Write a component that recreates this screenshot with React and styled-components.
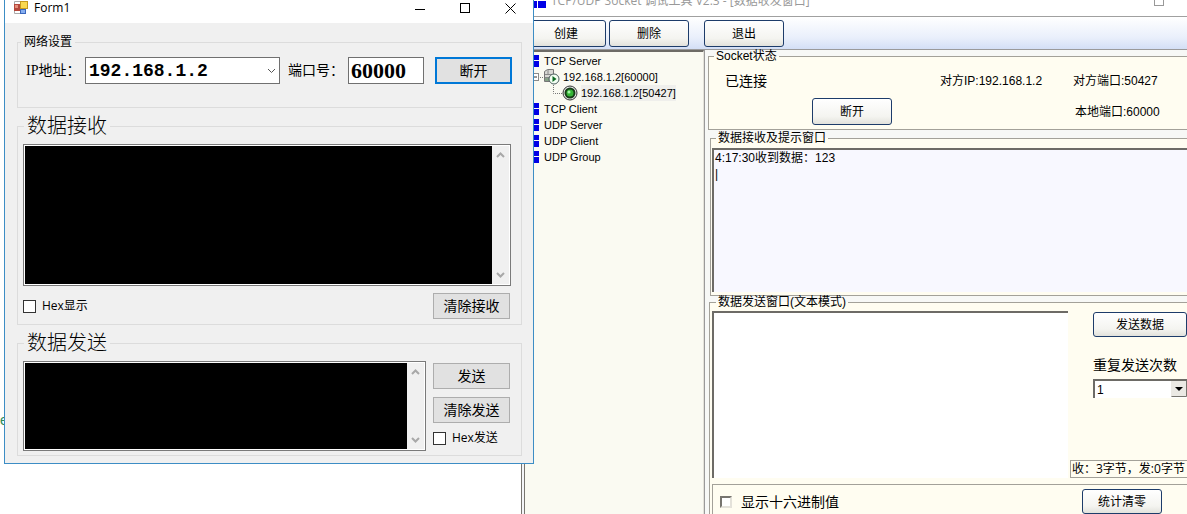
import React, { useState } from 'react';
import styled, { createGlobalStyle } from 'styled-components';

const GlobalStyle = createGlobalStyle`
  * {
    box-sizing: border-box;
  }

  html,
  body,
  #root {
    height: 100%;
    margin: 0;
  }

  body {
    overflow: hidden;
    background: #ffffff;
    color: #000000;
  }

  button,
  input,
  select,
  textarea {
    margin: 0;
    padding: 0;
    border-radius: 0;
    color: inherit;
    font: inherit;
  }
`;

const Desktop = styled.div`
  position: relative;
  height: 100%;
  overflow: hidden;
`;

const CodeEditor = styled.div`
  display: flex;
  flex-direction: column;
  height: 100%;
  padding-top: 410px;
  color: #2e8b57;
  font: 14px/20px 'Liberation Sans', sans-serif;
`;

/* ---------- Form1 ---------- */

const FormWindow = styled.section`
  position: absolute;
  top: -8px;
  left: 4px;
  width: 530px;
  background: #f0f0f0;
  border: 1px solid #3c8dc5;
  font: 12px/14px 'Open Sans', 'Noto Sans CJK SC', sans-serif;
`;

const FormTitleBar = styled.header`
  display: flex;
  align-items: center;
  gap: 6px;
  height: 30px;
  padding: 0 17px 0 9px;
  background: #ffffff;
`;

const FormTitle = styled.h1`
  flex: 1;
  margin: 0;
  font-size: 12px;
  font-weight: 400;
`;

const WindowControls = styled.div`
  display: flex;
  gap: 34px;
`;

const WindowButton = styled.button`
  display: flex;
  background: none;
  border: none;
`;

const FormBody = styled.div`
  display: flex;
  flex-direction: column;
  gap: 6px;
  padding: 12px 11px 7px 12px;
`;

const FormGroup = styled.fieldset`
  min-width: 0;
  margin: 0;
  padding: ${(props) => props.$padding || '6px 10px 4px 5px'};
  border: 1px solid #dcdcdc;
`;

const FormLegend = styled.legend`
  margin-left: ${(props) => (props.$large ? '1px' : '-5px')};
  padding: 0 3px;
  font-size: ${(props) => (props.$large ? '20px' : '12px')};
  line-height: ${(props) => (props.$large ? '24px' : '14px')};
  font-weight: ${(props) => (props.$large ? 300 : 400)};
`;

const NetworkRow = styled.div`
  display: flex;
  align-items: center;
`;

const NetworkLabel = styled.label`
  width: ${(props) => props.$width};
  font: 14px/20px 'Liberation Serif', 'Noto Sans CJK SC', serif;
  white-space: nowrap;
`;

const Combo = styled.div`
  display: grid;
  flex: 1;
  align-items: center;
  margin-right: 8px;

  > * {
    grid-area: 1 / 1;
  }

  > svg {
    justify-self: end;
    margin-right: 4px;
    pointer-events: none;
  }
`;

const AddressSelect = styled.select`
  width: 100%;
  height: 27px;
  padding-left: 3px;
  appearance: none;
  background: #ffffff;
  border: 1px solid #707070;
  font: bold 18px/24px 'Liberation Mono', monospace;
`;

const PortInput = styled.input`
  width: 76px;
  height: 27px;
  margin-right: 11px;
  padding-left: 2px;
  background: #ffffff;
  border: 1px solid #707070;
  font: bold 22px/24px 'Liberation Serif', serif;
`;

const FormButton = styled.button`
  width: 77px;
  height: ${(props) => (props.$primary ? '27px' : '26px')};
  background: #e1e1e1;
  border: ${(props) => (props.$primary ? '2px solid #0078d7' : '1px solid #adadad')};
  font-size: 14px;
  line-height: 20px;
`;

const Console = styled.div`
  display: flex;
  flex: 1;
  height: ${(props) => props.$height};
  padding: 1px;
  background: #ffffff;
  border: 1px solid #7a7a7a;
`;

const ConsoleText = styled.textarea`
  flex: 1;
  min-width: 0;
  background: #000000;
  border: none;
  color: #ffffff;
  outline: none;
  resize: none;
`;

const ScrollRail = styled.div`
  display: flex;
  flex-direction: column;
  align-items: center;
  justify-content: space-between;
  width: 17px;
  padding: 6px 0;
  background: #f0f0f0;
`;

const ReceiveFooter = styled.div`
  display: flex;
  align-items: center;
  justify-content: space-between;
  margin-top: 7px;
  padding: 0 1px 1px 0;
`;

const SendArea = styled.div`
  display: flex;
  gap: 7px;
`;

const SendActions = styled.div`
  display: flex;
  flex-direction: column;
  gap: 8px;
  padding: 2px 1px 0 0;
`;

const FormCheck = styled.label`
  display: flex;
  align-items: center;
  gap: 6px;
  white-space: nowrap;
`;

const FormCheckbox = styled.input`
  width: 13px;
  height: 13px;
  appearance: none;
  background: #ffffff;
  border: 1px solid #333333;

  &:checked {
    background: #333333;
  }
`;

/* ---------- Socket tool ---------- */

const SocketWindow = styled.section`
  position: absolute;
  top: -14px;
  right: 0;
  bottom: 0;
  left: 521px;
  display: flex;
  flex-direction: column;
  overflow: hidden;
  background: #f4f5f8;
  border-left: 4px double #77756f;
  font: 12px/16px 'Liberation Sans', 'Noto Sans CJK SC', sans-serif;
`;

const SocketTitleBar = styled.header`
  display: flex;
  flex: none;
  align-items: center;
  gap: 5px;
  height: 31px;
  padding: 0 22px 0 5px;
  background: #ffffff;
  border-bottom: 1px solid #a0a0a0;
  color: #999999;
`;

const SocketTitle = styled.h1`
  flex: 1;
  margin: 0;
  font: 12px/16px 'Open Sans', 'Noto Sans CJK SC', sans-serif;
`;

const Toolbar = styled.nav`
  display: flex;
  flex: none;
  gap: 3px;
  height: 33px;
  padding: 3px 1px;
  background: linear-gradient(#ffffff, #e9effb 65%, #d3dff5);
  border-bottom: 1px solid #9a9a9a;
`;

const ToolButton = styled.button`
  width: ${(props) => props.$width || '80px'};
  height: ${(props) => props.$height || '27px'};
  background: linear-gradient(#ffffff, #f4f4f0 70%, #e2e2dc);
  border: 1px solid #1d3c6a;
  border-radius: 3px;
`;

const ToolGap = styled.span`
  width: 9px;
`;

const SocketBody = styled.div`
  display: grid;
  flex: 1;
  grid-template-columns: 179px minmax(0, 1fr);
  min-height: 0;
`;

const TreePanel = styled.ul`
  margin: 0;
  padding: 1px 0 0;
  background: #fafaf2;
  border-top: 2px solid #6d6b66;
  border-right: 1px solid #e4e2da;
  font-size: 11px;
  list-style: none;
`;

const TreeRow = styled.li`
  display: flex;
  align-items: center;
  gap: ${(props) => (props.$depth ? '3px' : '4px')};
  height: 16px;
  padding-left: ${(props) => [0, 6, 28][props.$depth || 0]}px;
  white-space: nowrap;
`;

const TreeLabel = styled.span`
  background: ${(props) => (props.$selected ? '#efefec' : 'none')};
`;

const Detail = styled.main`
  display: flex;
  flex-direction: column;
  min-width: 0;
  padding-left: 3px;
  background: #f7f8f6;
  border-left: 1px solid #9a9a9a;
`;

const StatusGroup = styled.fieldset`
  min-width: 0;
  margin: 0;
  padding: 7px 0 4px 16px;
  background: #fffdf1;
  border: 1px solid #a3a199;
  border-right: none;
`;

const ToolLegend = styled.legend`
  margin-left: ${(props) => props.$offset || '4px'};
  padding: 0 2px;
  line-height: 12px;
`;

const StatusGrid = styled.div`
  display: grid;
  grid-template-columns: 87px 128px 133px 1fr;
  grid-template-rows: 24px 27px;
  row-gap: 5px;
  align-items: center;
  white-space: nowrap;
`;

const ConnectionState = styled.span`
  font-size: 14px;
`;

const LocalPort = styled.span`
  grid-column: 4;
  padding-left: 2px;
`;

const ReceiveGroup = styled.fieldset`
  min-width: 0;
  margin: 2px 0 0 2px;
  padding: 4px 0 3px 1px;
  background: #fffdf1;
  border: 1px solid #a3a199;
  border-right: none;
`;

const ToolTextArea = styled.textarea`
  display: block;
  width: 100%;
  height: ${(props) => props.$height};
  padding: 0 1px;
  background: ${(props) => props.$background || '#ffffff'};
  border: 0 solid #6d6b66;
  border-width: 2px 0 0 2px;
  outline: none;
  resize: none;
`;

const SendGroup = styled.fieldset`
  flex: 1;
  min-width: 0;
  margin: 0 0 0 1px;
  padding: 3px 0 0 2px;
  background: #fffdf1;
  border: 1px solid #a3a199;
  border-right: none;
  border-bottom: none;
`;

const SendGrid = styled.div`
  display: grid;
  grid-template-columns: minmax(0, 1fr) 117px;
  gap: 2px;
`;

const SendSide = styled.div`
  display: flex;
  flex-direction: column;
  align-items: flex-start;
  padding: 1px 0 0 23px;
`;

const RepeatLabel = styled.label`
  margin: 20px 0 6px;
  font-size: 14px;
  white-space: nowrap;
`;

const RepeatCombo = styled.div`
  display: grid;
  width: 94px;

  > * {
    grid-area: 1 / 1;
  }

  > svg {
    justify-self: end;
    margin-top: 2px;
    pointer-events: none;
  }
`;

const RepeatSelect = styled.select`
  width: 100%;
  height: 19px;
  padding-left: 2px;
  appearance: none;
  background: #ffffff;
  border: 0 solid #6d6b66;
  border-width: 2px 0 0 2px;
`;

const Counter = styled.output`
  align-self: stretch;
  height: 18px;
  margin: auto 0 0 -23px;
  padding-left: 1px;
  border: 1px solid #a3a199;
  border-right: none;
  font: 12px/16px 'Open Sans', 'Noto Sans CJK SC', sans-serif;
  white-space: nowrap;
`;

const OptionsBar = styled.div`
  display: flex;
  align-items: center;
  justify-content: space-between;
  margin-top: 6px;
  padding: 4px 25px 4px 7px;
  border: 1px solid #a3a199;
  border-right: none;
`;

const ToolCheck = styled.label`
  display: flex;
  align-items: center;
  gap: 9px;
  font-size: 14px;
`;

const ToolCheckbox = styled.input`
  width: 12px;
  height: 12px;
  appearance: none;
  background: #ffffff;
  border: 2px solid;
  border-color: #77756f #e4e2da #e4e2da #77756f;

  &:checked {
    background: #333333;
  }
`;

const FormIcon = () => (
  <svg width="14" height="16" viewBox="0 0 14 16" aria-hidden="true">
    <rect x="0" y="4" width="6" height="7" fill="#b5483c" />
    <rect x="1" y="5" width="3" height="3" fill="#e58f7d" />
    <rect x="6" y="1" width="8" height="8" fill="#c79a1e" />
    <rect x="7" y="2" width="6" height="6" fill="#fbd94f" />
    <rect x="6" y="9" width="6" height="5" fill="#3a67bd" />
    <rect x="7" y="10" width="4" height="3" fill="#86aef0" />
    <path d="M0.5 4V1.5H6M0.5 11v2.5H6" fill="none" stroke="#aaaaaa" />
  </svg>
);

const Chevron = ({ up, color = '#a8a8a8', width = 9 }) => (
  <svg width={width} height="6" viewBox="0 0 9 6" aria-hidden="true">
    <path
      d={up ? 'M1 5l3.5-3.5L8 5' : 'M1 1l3.5 3.5L8 1'}
      fill="none"
      stroke={color}
      strokeWidth={up || color === '#a8a8a8' ? 2 : 1}
    />
  </svg>
);

const BlueBlocks = () => (
  <svg width="15" height="12" viewBox="0 0 15 12" aria-hidden="true">
    <path
      d="M0 0h8v5H0zM9 0h5v5H9zM0 6h8v6H0zM9 6h5v6H9z"
      fill="#0000e6"
    />
  </svg>
);

const AppBlocks = () => (
  <svg width="16" height="14" viewBox="0 0 16 14" aria-hidden="true">
    <path d="M0 0h7v6H0zM8 0h8v6H8zM0 7h7v7H0zM8 7h8v7H8z" fill="#0000e6" />
  </svg>
);

const ServerIcon = () => (
  <svg width="29" height="16" viewBox="0 0 29 16" aria-hidden="true">
    <rect x="0.5" y="4.5" width="7" height="7" fill="#ffffff" stroke="#8a8a8a" />
    <path d="M2 8h4" stroke="#333333" />
    <path d="M9 8.5h4" stroke="#777777" strokeDasharray="1 1" />
    <path d="M13.5 2.5l3-2h6v12h-9z" fill="#d8d8d4" stroke="#777777" />
    <path d="M14 5.5h7M14 8.5h7M17 1v4" stroke="#888888" />
    <rect x="14" y="9" width="4" height="3" fill="#86a186" />
    <circle cx="23" cy="10" r="5" fill="#f2fff2" stroke="#4b5d5d" />
    <path d="M21.5 7v6l4-3z" fill="#0c6b23" />
  </svg>
);

const ClientIcon = () => (
  <svg width="25" height="16" viewBox="0 0 25 16" aria-hidden="true">
    <path d="M0.5 0v8.5H9" fill="none" stroke="#777777" strokeDasharray="1 1" />
    <circle cx="17" cy="8" r="7" fill="#e8e8e8" stroke="#333333" />
    <circle cx="17" cy="8" r="4.5" fill="#35b535" stroke="#173d17" strokeWidth="2" />
    <circle cx="16" cy="7" r="1.5" fill="#a4f5a4" />
  </svg>
);

const ScrollBar = () => (
  <ScrollRail>
    <Chevron up />
    <Chevron />
  </ScrollRail>
);

const Form1 = () => {
  const [port, setPort] = useState('60000');

  return (
    <FormWindow>
      <FormTitleBar>
        <FormIcon />
        <FormTitle>Form1</FormTitle>
        <WindowControls>
          <WindowButton aria-label="Minimize">
            <svg width="11" height="11">
              <path d="M0 6.5h10" stroke="#000000" />
            </svg>
          </WindowButton>
          <WindowButton aria-label="Maximize">
            <svg width="11" height="11">
              <rect x="0.5" y="0.5" width="9" height="9" fill="none" stroke="#000000" />
            </svg>
          </WindowButton>
          <WindowButton aria-label="Close">
            <svg width="11" height="11">
              <path d="M0.5 0.5l10 10M10.5 0.5l-10 10" stroke="#000000" />
            </svg>
          </WindowButton>
        </WindowControls>
      </FormTitleBar>
      <FormBody>
        <FormGroup $padding="8px 9px 23px 8px">
          <FormLegend>网络设置</FormLegend>
          <NetworkRow>
            <NetworkLabel htmlFor="address" $width="59px">IP地址：</NetworkLabel>
            <Combo>
              <AddressSelect id="address">
                <option>192.168.1.2</option>
              </AddressSelect>
              <Chevron color="#555555" />
            </Combo>
            <NetworkLabel htmlFor="port" $width="60px">端口号：</NetworkLabel>
            <PortInput
              id="port"
              value={port}
              onChange={(event) => setPort(event.target.value)}
            />
            <FormButton $primary>断开</FormButton>
          </NetworkRow>
        </FormGroup>

        <FormGroup>
          <FormLegend $large>数据接收</FormLegend>
          <Console $height="142px">
            <ConsoleText aria-label="数据接收" readOnly />
            <ScrollBar />
          </Console>
          <ReceiveFooter>
            <FormCheck>
              <FormCheckbox type="checkbox" />
              Hex显示
            </FormCheck>
            <FormButton>清除接收</FormButton>
          </ReceiveFooter>
        </FormGroup>

        <FormGroup>
          <FormLegend $large>数据发送</FormLegend>
          <SendArea>
            <Console $height="90px">
              <ConsoleText aria-label="数据发送" />
              <ScrollBar />
            </Console>
            <SendActions>
              <FormButton>发送</FormButton>
              <FormButton>清除发送</FormButton>
              <FormCheck>
                <FormCheckbox type="checkbox" />
                Hex发送
              </FormCheck>
            </SendActions>
          </SendArea>
        </FormGroup>
      </FormBody>
    </FormWindow>
  );
};

const SocketTool = () => (
  <SocketWindow>
    <SocketTitleBar>
      <AppBlocks />
      <SocketTitle>TCP/UDP Socket 调试工具 V2.3 - [数据收发窗口]</SocketTitle>
      <WindowButton aria-label="Maximize">
        <svg width="11" height="11">
          <rect x="0.5" y="0.5" width="9" height="9" fill="none" stroke="#999999" />
        </svg>
      </WindowButton>
    </SocketTitleBar>
    <Toolbar>
      <ToolButton>创建</ToolButton>
      <ToolButton>删除</ToolButton>
      <ToolGap />
      <ToolButton>退出</ToolButton>
    </Toolbar>
    <SocketBody>
      <TreePanel>
        <TreeRow>
          <BlueBlocks />
          <TreeLabel>TCP Server</TreeLabel>
        </TreeRow>
        <TreeRow $depth={1}>
          <ServerIcon />
          <TreeLabel>192.168.1.2[60000]</TreeLabel>
        </TreeRow>
        <TreeRow $depth={2}>
          <ClientIcon />
          <TreeLabel $selected>192.168.1.2[50427]</TreeLabel>
        </TreeRow>
        {['TCP Client', 'UDP Server', 'UDP Client', 'UDP Group'].map((name) => (
          <TreeRow key={name}>
            <BlueBlocks />
            <TreeLabel>{name}</TreeLabel>
          </TreeRow>
        ))}
      </TreePanel>
      <Detail>
        <StatusGroup>
          <ToolLegend $offset="-11px">Socket状态</ToolLegend>
          <StatusGrid>
            <ConnectionState>已连接</ConnectionState>
            <span />
            <span>对方IP:192.168.1.2</span>
            <span>对方端口:50427</span>
            <span />
            <ToolButton>断开</ToolButton>
            <LocalPort>本地端口:60000</LocalPort>
          </StatusGrid>
        </StatusGroup>

        <ReceiveGroup>
          <ToolLegend>数据接收及提示窗口</ToolLegend>
          <ToolTextArea
            aria-label="数据接收及提示窗口"
            $height="144px"
            $background="#f8f8ff"
            readOnly
            value={'4:17:30收到数据：123\n|'}
          />
        </ReceiveGroup>

        <SendGroup>
          <ToolLegend>数据发送窗口(文本模式)</ToolLegend>
          <SendGrid>
            <ToolTextArea aria-label="数据发送窗口" $height="167px" />
            <SendSide>
              <ToolButton $width="94px" $height="25px">发送数据</ToolButton>
              <RepeatLabel htmlFor="repeat">重复发送次数</RepeatLabel>
              <RepeatCombo>
                <RepeatSelect id="repeat">
                  <option>1</option>
                </RepeatSelect>
                <svg width="16" height="16" aria-hidden="true">
                  <rect width="16" height="16" fill="#ebe9e4" />
                  <path d="M0.5 15.5h15V0" fill="none" stroke="#77756f" />
                  <path d="M4 6h8l-4 4z" fill="#000000" />
                </svg>
              </RepeatCombo>
              <Counter>收：3字节，发:0字节</Counter>
            </SendSide>
          </SendGrid>
          <OptionsBar>
            <ToolCheck>
              <ToolCheckbox type="checkbox" />
              显示十六进制值
            </ToolCheck>
            <ToolButton $height="25px">统计清零</ToolButton>
          </OptionsBar>
        </SendGroup>
      </Detail>
    </SocketBody>
  </SocketWindow>
);

const App = () => (
  <>
    <GlobalStyle />
    <Desktop>
      <CodeEditor>e</CodeEditor>
      <SocketTool />
      <Form1 />
    </Desktop>
  </>
);

export default App;
